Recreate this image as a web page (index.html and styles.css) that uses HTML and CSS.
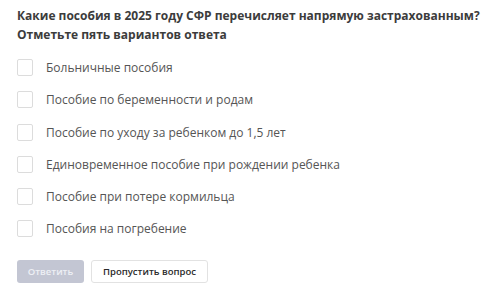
FILE: index.html
```html
<!DOCTYPE html>
<html lang="ru">
<head>
<meta charset="utf-8">
<link rel="stylesheet" href="styles.css">
</head>
<body>
<div class="quiz">
  <div class="question">Какие пособия в 2025 году СФР перечисляет напрямую застрахованным?</div>
  <div class="hint">Отметьте пять вариантов ответа</div>
  <ul class="options">
    <li class="option"><span class="box"></span><span class="label">Больничные пособия</span></li>
    <li class="option"><span class="box"></span><span class="label">Пособие по беременности и родам</span></li>
    <li class="option"><span class="box"></span><span class="label">Пособие по уходу за ребенком до 1,5 лет</span></li>
    <li class="option"><span class="box"></span><span class="label">Единовременное пособие при рождении ребенка</span></li>
    <li class="option"><span class="box"></span><span class="label">Пособие при потере кормильца</span></li>
    <li class="option"><span class="box"></span><span class="label">Пособия на погребение</span></li>
  </ul>
  <div class="actions">
    <button class="btn btn-primary">Ответить</button>
    <button class="btn btn-secondary">Пропустить вопрос</button>
  </div>
</div>
</body>
</html>
```
FILE: styles.css
```css
html, body {
  margin: 0;
  padding: 0;
  background: #fff;
}
body {
  font-family: "Open Sans", "Liberation Sans", sans-serif;
  color: #3a3a3a;
}
.quiz {
  padding: 7px 17px 0 17px;
}
.question, .hint {
  font-size: 12px;
  font-weight: 700;
  line-height: 18.5px;
  color: #3c3c3c;
}
.options {
  list-style: none;
  margin: 15px 0 0 0;
  padding: 0;
  display: flex;
  flex-direction: column;
  gap: 15.25px;
}
.option {
  display: flex;
  align-items: center;
  height: 17px;
}
.box {
  width: 14px;
  height: 15px;
  border: 1px solid #dcdcdc;
  border-radius: 2px;
  flex: none;
}
.label {
  margin-left: 13px;
  font-size: 12px;
  color: #555;
}
.actions {
  display: flex;
  gap: 7px;
  margin-top: 23px;
}
.btn {
  font-family: inherit;
  font-size: 9.5px;
  height: 23px;
  border-radius: 3px;
  padding: 0;
  cursor: pointer;
}
.btn-primary {
  width: 67px;
  background: #c3c6d3;
  border: none;
  color: #eef0f5;
  font-weight: 600;
}
.btn-secondary {
  width: 117px;
  background: #fff;
  border: 1px solid #e2e2e2;
  color: #2a2a2a;
  font-weight: 600;
}
```
